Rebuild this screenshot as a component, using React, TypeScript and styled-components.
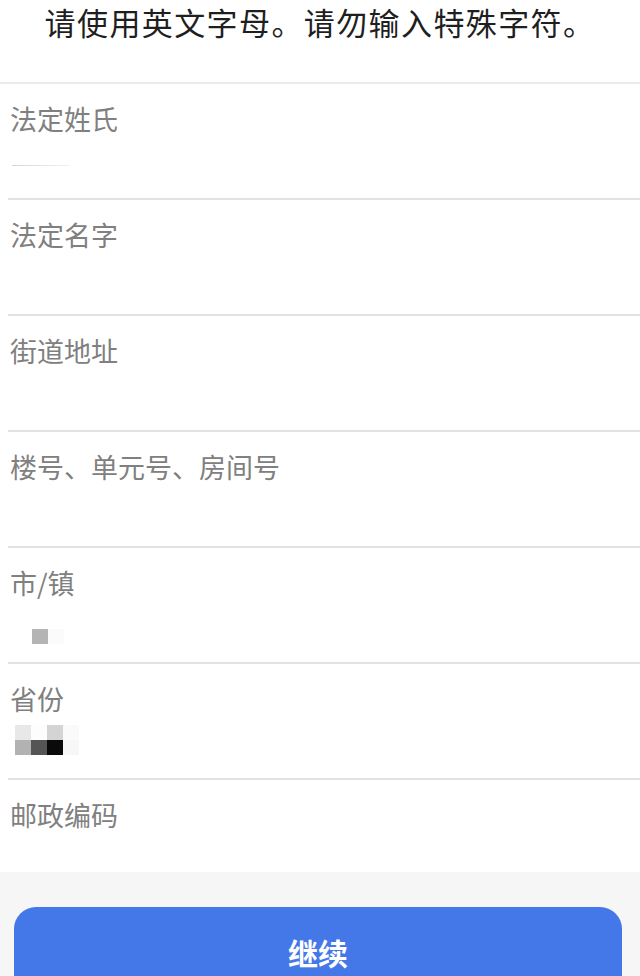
import styled, { createGlobalStyle } from 'styled-components';

const GlobalStyle = createGlobalStyle`
  html, body {
    margin: 0;
    padding: 0;
    background: #ffffff;
    font-family: "Noto Sans CJK SC", "Noto Sans", sans-serif;
  }
  * { box-sizing: border-box; }
`;

const Page = styled.div`
  height: 976px;
  display: flex;
  flex-direction: column;
  overflow: hidden;
`;

const Notice = styled.div`
  height: 84px;
  flex-shrink: 0;
  border-bottom: 2px solid #ebebeb;
  text-align: center;
  font-size: 31px;
  line-height: 44px;
  color: #1f1f1f;
  letter-spacing: 1.4px;
`;

const FieldList = styled.div`
  flex: 1;
  overflow: hidden;
  margin-left: 8px;
`;

const Field = styled.div`
  height: 116px;
  flex-shrink: 0;
  border-bottom: 2px solid #e2e2e2;
  padding: 19px 0 0 2px;
`;

const Label = styled.div`
  font-size: 27px;
  line-height: 32px;
  color: #808080;
`;

const Mask = styled.div<{ $x: number; $y: number }>`
  display: grid;
  grid-template-columns: repeat(4, 16px);
  grid-auto-rows: 15px;
  margin: ${(p) => p.$y}px 0 0 ${(p) => p.$x}px;
`;

const Pixel = styled.div<{ $c: string }>`
  background: ${(p) => p.$c};
`;

const Hairline = styled.div<{ $w: number }>`
  width: ${(p) => p.$w}px;
  height: 1px;
  margin: 30px 0 0 2px;
  background: linear-gradient(90deg, #d4d4d4, #f2f2f2);
`;

const Footer = styled.div`
  height: 104px;
  flex-shrink: 0;
  background: #f6f6f6;
  padding: 35px 18px 0 14px;
`;

const ContinueButton = styled.button`
  display: block;
  width: 100%;
  height: 90px;
  border: none;
  border-radius: 22px;
  background: #4477e8;
  color: #ffffff;
  font-family: inherit;
  font-size: 30px;
  font-weight: 600;
  line-height: 90px;
  padding: 0 0 21px;
  text-align: center;
`;

type Masked = { label: string; mask?: string[][]; x?: number; y?: number; line?: number };

const fields: Masked[] = [
  { label: '法定姓氏', line: 58 },
  { label: '法定名字' },
  { label: '街道地址' },
  { label: '楼号、单元号、房间号' },
  { label: '市/镇', mask: [['#b4b4b4', '#fbfbfb']], x: 22, y: 30 },
  {
    label: '省份',
    mask: [
      ['#e8e8e8', '#fdfdfd', '#d4d4d4', '#fafafa'],
      ['#b2b2b2', '#555555', '#0a0a0a', '#f7f7f7'],
    ],
    x: 5,
    y: 10,
  },
  { label: '邮政编码' },
];

export default function App() {
  return (
    <Page>
      <GlobalStyle />
      <Notice>请使用英文字母。请勿输入特殊字符。</Notice>
      <FieldList>
        {fields.map((f) => (
          <Field key={f.label}>
            <Label>{f.label}</Label>
            {f.line && <Hairline $w={f.line} />}
            {f.mask && (
              <Mask $x={f.x ?? 0} $y={f.y ?? 0}>
                {f.mask.flat().map((c, i) => (
                  <Pixel key={i} $c={c} />
                ))}
              </Mask>
            )}
          </Field>
        ))}
      </FieldList>
      <Footer>
        <ContinueButton>继续</ContinueButton>
      </Footer>
    </Page>
  );
}
